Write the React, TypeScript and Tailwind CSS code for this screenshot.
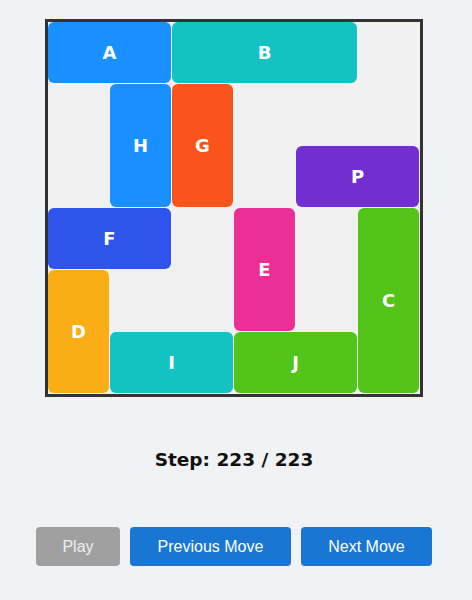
import React from "react";

type Block = { id: string; col: number; row: number; w: number; h: number; color: string };

const blocks: Block[] = [
  { id: "A", col: 1, row: 1, w: 2, h: 1, color: "bg-[#1890ff]" },
  { id: "B", col: 3, row: 1, w: 3, h: 1, color: "bg-[#13c2c2]" },
  { id: "H", col: 2, row: 2, w: 1, h: 2, color: "bg-[#1890ff]" },
  { id: "G", col: 3, row: 2, w: 1, h: 2, color: "bg-[#fa541c]" },
  { id: "P", col: 5, row: 3, w: 2, h: 1, color: "bg-[#722ed1]" },
  { id: "F", col: 1, row: 4, w: 2, h: 1, color: "bg-[#2f54eb]" },
  { id: "E", col: 4, row: 4, w: 1, h: 2, color: "bg-[#eb2f96]" },
  { id: "C", col: 6, row: 4, w: 1, h: 3, color: "bg-[#52c41a]" },
  { id: "D", col: 1, row: 5, w: 1, h: 2, color: "bg-[#faad14]" },
  { id: "I", col: 2, row: 6, w: 2, h: 1, color: "bg-[#13c2c2]" },
  { id: "J", col: 4, row: 6, w: 2, h: 1, color: "bg-[#52c41a]" },
];

export default function App() {
  return (
    <div className="min-h-screen bg-[#f0f2f5] flex flex-col items-center pr-[4px] pt-[19px]">
      <div className="border-[3px] border-[#333333] bg-[#f0f0f0] grid grid-cols-[repeat(6,62px)] grid-rows-[repeat(6,62px)]">
        {blocks.map((b) => (
          <div
            key={b.id}
            className={`${b.color} mr-px mb-px rounded-md flex items-center justify-center text-white font-bold text-[18px]`}
            style={{
              gridColumn: `${b.col} / span ${b.w}`,
              gridRow: `${b.row} / span ${b.h}`,
              fontFamily: '"DejaVu Sans", Verdana, sans-serif',
            }}
          >
            {b.id}
          </div>
        ))}
      </div>
      <div
        className="mt-[51px] text-[18.5px] font-bold text-[#111111] leading-[24px]"
        style={{ fontFamily: '"DejaVu Sans", Verdana, sans-serif' }}
      >
        Step: 223 / 223
      </div>
      <div
        className="mt-[55px] flex gap-[10px]"
        style={{ fontFamily: '"Liberation Sans", Arial, sans-serif' }}
      >
        <button className="h-[39px] w-[84px] rounded-[4px] bg-[#a0a0a0] text-[#ededed] text-[16px]">
          Play
        </button>
        <button className="h-[39px] w-[161px] rounded-[4px] bg-[#1976d2] text-white text-[16px]">
          Previous Move
        </button>
        <button className="h-[39px] w-[131px] rounded-[4px] bg-[#1976d2] text-white text-[16px]">
          Next Move
        </button>
      </div>
    </div>
  );
}
